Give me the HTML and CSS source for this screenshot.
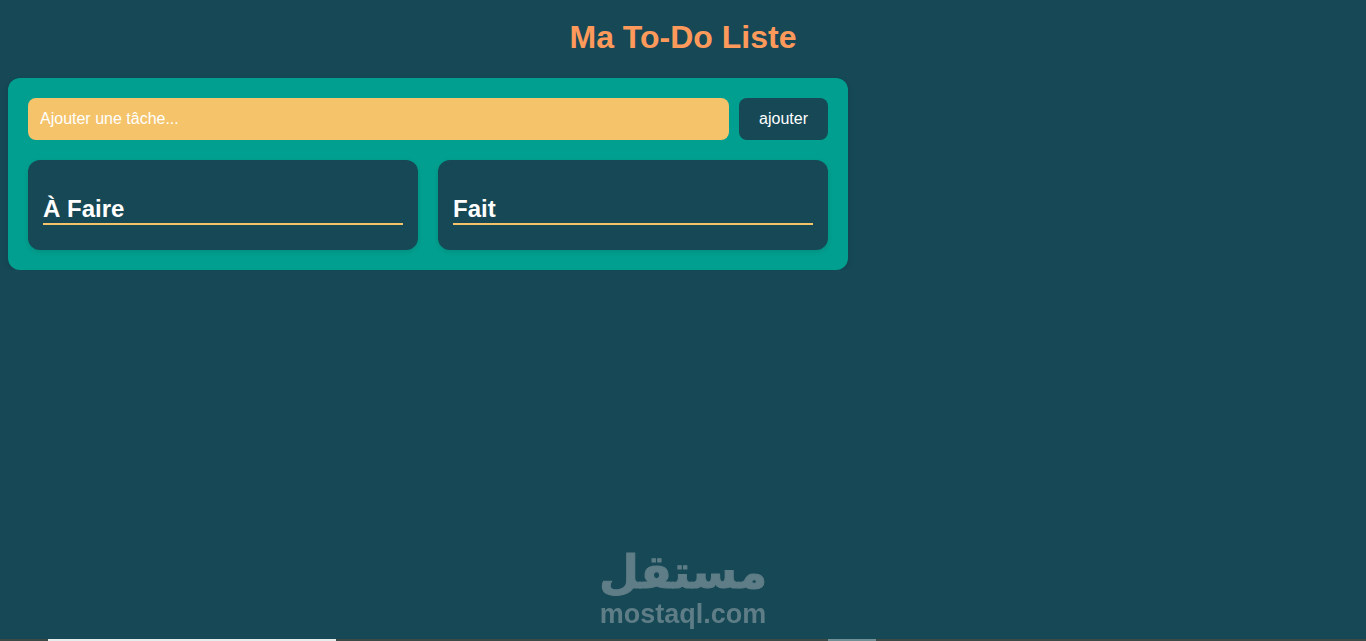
FILE: index.html
```html
<!DOCTYPE html>
<html lang="fr">
<head>
    <meta charset="UTF-8">
    <meta name="viewport" content="width=device-width, initial-scale=1.0">
    <title>Ma To-Do Liste</title>
    <link rel="stylesheet" href="styles.css">
</head>
<body>
    <h1 class="title">Ma To-Do Liste</h1>

    <div class="todo">
        <div class="todo__form">
            <input class="todo__input" type="text" placeholder="Ajouter une tâche...">
            <button class="todo__button">ajouter</button>
        </div>

        <div class="todo__lists">
            <div class="todo__list">
                <h2 class="todo__heading">À Faire</h2>
            </div>
            <div class="todo__list">
                <h2 class="todo__heading">Fait</h2>
            </div>
        </div>
    </div>

    <div class="watermark">
        <span class="watermark__arabic" lang="ar" dir="rtl">مستقل</span>
        <span class="watermark__latin">mostaql.com</span>
    </div>

    <div class="taskbar">
        <div class="taskbar__white"></div>
        <div class="taskbar__thumb"></div>
    </div>
</body>
</html>
```

FILE: styles.css
```css
* {
    box-sizing: border-box;
}
body {
    margin: 0;
    padding: 0 8px;
    background-color: #164856;
    font-family: "Liberation Sans", Arial, sans-serif;
    color: #fff;
}
.title {
    margin: 0;
    padding: 19px 0 22px;
    text-align: center;
    font-size: 32px;
    line-height: 37px;
    color: #fd9a5b;
}
.todo {
    width: 840px;
    padding: 20px;
    background-color: #009f8f;
    border-radius: 12px;
    box-shadow: 0 2px 6px rgba(0,0,0,0.1);
}
.todo__form {
    display: flex;
    gap: 10px;
    margin-bottom: 20px;
}
.todo__input {
    flex: 1;
    height: 42px;
    padding: 0 12px;
    background-color: #f4c36a;
    border: none;
    border-radius: 8px;
    outline: none;
    font-family: inherit;
    font-size: 16px;
    color: #fff;
}
.todo__input::placeholder {
    color: #fff;
    opacity: 1;
}
.todo__button {
    width: 89px;
    height: 42px;
    background-color: #164856;
    border: none;
    border-radius: 8px;
    cursor: pointer;
    font-family: inherit;
    font-size: 16px;
    color: #fff;
}
.todo__lists {
    display: flex;
    gap: 20px;
}
.todo__list {
    flex: 1;
    height: 90px;
    padding: 15px;
    background-color: #164856;
    border-radius: 12px;
    box-shadow: 0 2px 5px rgba(0,0,0,0.1);
}
.todo__heading {
    margin: 20px 0 10px;
    border-bottom: 2px solid #f4c36a;
    font-size: 24px;
    line-height: 28px;
}
.watermark {
    position: fixed;
    left: 600px;
    top: 545px;
    width: 166px;
    display: flex;
    flex-direction: column;
    align-items: center;
    color: #5f7d86;
    font-weight: bold;
}
.watermark__arabic {
    height: 54px;
    font-family: "DejaVu Sans", sans-serif;
    font-size: 46px;
    line-height: 54px;
    -webkit-text-stroke: 1px #5f7d86;
}
.watermark__latin {
    font-size: 27px;
    line-height: 31px;
}
.taskbar {
    position: fixed;
    left: 0;
    right: 0;
    bottom: 0;
    height: 2px;
    display: flex;
    padding-left: 48px;
    background-color: #3b4a47;
}
.taskbar__white {
    width: 288px;
    background-color: #e6ecec;
}
.taskbar__thumb {
    width: 48px;
    margin-left: 492px;
    background-color: #6f8f94;
}
```
